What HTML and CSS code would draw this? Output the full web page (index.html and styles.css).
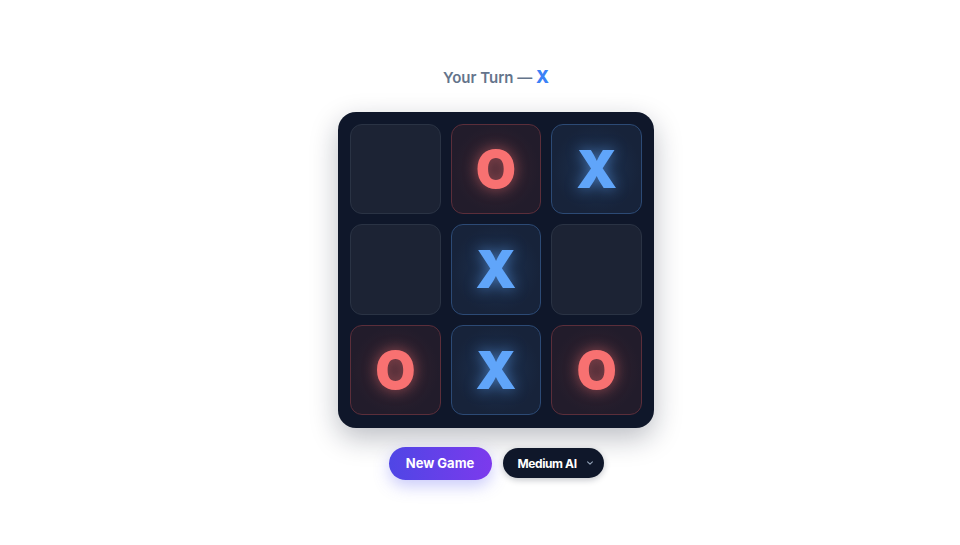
FILE: index.html
```html
<!DOCTYPE html>
<html>
<head>
<meta charset="utf-8">
<link rel="stylesheet" href="styles.css">
</head>
<body>
<main class="app">
  <div class="status">Your Turn — <span class="status-mark">X</span></div>
  <div class="board">
    <div class="cell"></div>
    <div class="cell cell-o"><span class="mark">O</span></div>
    <div class="cell cell-x"><span class="mark">X</span></div>
    <div class="cell"></div>
    <div class="cell cell-x"><span class="mark">X</span></div>
    <div class="cell"></div>
    <div class="cell cell-o"><span class="mark">O</span></div>
    <div class="cell cell-x"><span class="mark">X</span></div>
    <div class="cell cell-o"><span class="mark">O</span></div>
  </div>
  <div class="controls">
    <button class="btn btn-primary">New Game</button>
    <button class="btn btn-select"><span>Medium AI</span><svg class="chev" width="8" height="8" viewBox="0 0 10 10"><path d="M2 3.5 L5 6.5 L8 3.5" fill="none" stroke="#94a3b8" stroke-width="1.4" stroke-linecap="round" stroke-linejoin="round"/></svg></button>
  </div>
</main>
</body>
</html>
```
FILE: styles.css
```css
* { box-sizing: border-box; }
html, body { margin: 0; height: 100%; }
body {
  background: #ffffff;
  font-family: Inter, "Noto Sans", "Liberation Sans", sans-serif;
}
.app {
  height: 545px;
  display: flex;
  flex-direction: column;
  align-items: center;
  justify-content: center;
  padding-left: 32px;
  padding-top: 1px;
}
.status {
  font-size: 15px;
  font-weight: 600;
  color: #64748b;
  line-height: 20px;
  margin-bottom: 24px;
}
.status-mark {
  color: #3b82f6;
  font-weight: 800;
  font-size: 17px;
}
.board {
  width: 316px;
  height: 316px;
  padding: 12px;
  background: #0f172a;
  border-radius: 18px;
  display: grid;
  grid-template-columns: repeat(3, 1fr);
  grid-template-rows: repeat(3, 1fr);
  gap: 10px;
  box-shadow: 0 10px 28px rgba(15, 23, 42, 0.28);
}
.cell {
  background: #1c2334;
  border: 1px solid #2a3344;
  border-radius: 12px;
  display: flex;
  align-items: center;
  justify-content: center;
}
.cell-o {
  background: radial-gradient(circle at center, #35232f 0%, #221c2b 70%);
  border-color: #5b2e3a;
}
.cell-x {
  background: radial-gradient(circle at center, #1c3150 0%, #17233a 70%);
  border-color: #2c4a75;
}
.mark {
  font-size: 52px;
  font-weight: 900;
  line-height: 1;
  padding-top: 2px;
}
.cell-o .mark {
  color: #f87171;
  text-shadow: 0 0 14px rgba(248, 113, 113, 0.55);
}
.cell-x .mark {
  color: #60a5fa;
  text-shadow: 0 0 14px rgba(96, 165, 250, 0.6);
}
.controls {
  display: flex;
  gap: 11px;
  margin-top: 19px;
  align-items: center;
}
.btn {
  font-family: Inter, "Noto Sans", "Liberation Sans", sans-serif;
  border: none;
  border-radius: 999px;
  color: #fff;
  font-weight: 700;
  font-size: 13px;
  cursor: pointer;
}
.btn-primary {
  width: 103px;
  height: 33px;
  background: linear-gradient(90deg, #4f46e5, #7c3aed);
  box-shadow: 0 6px 16px rgba(99, 102, 241, 0.35);
}
.btn-select {
  width: 101px;
  height: 30px;
  font-size: 12px;
  letter-spacing: -0.4px;
  background: #0f172a;
  display: flex;
  align-items: center;
  justify-content: flex-start;
  gap: 9px;
  padding: 0 0 0 15px;
  box-shadow: 0 2px 6px rgba(15, 23, 42, 0.25);
}
.chev { display: block; flex: none; }
```
